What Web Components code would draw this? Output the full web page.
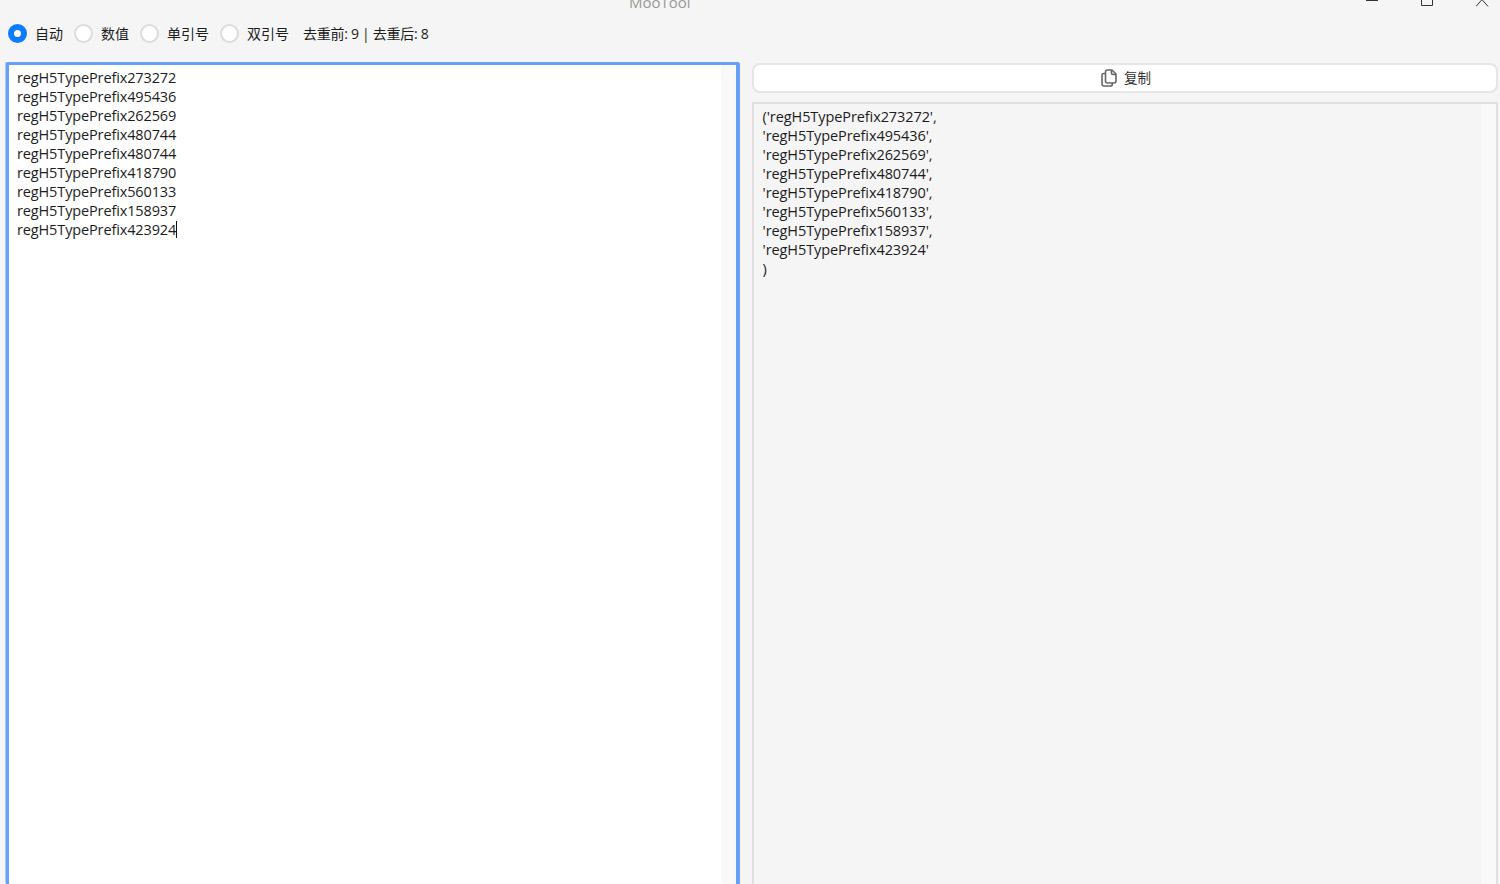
<!DOCTYPE html>
<html lang="zh">
<head>
<meta charset="utf-8">
<title>MooTool</title>
<style>
  html, body { margin: 0; height: 100%; overflow: hidden; background: #f5f5f5; }
  body {
    display: flex;
    flex-direction: column;
    font: 14.5px/19px "Open Sans", "Noto Sans CJK SC", sans-serif;
    color: #1c1c1c;
  }
</style>
</head>
<body>
<title-bar>MooTool</title-bar>
<tool-bar>
  <radio-item checked>自动</radio-item>
  <radio-item>数值</radio-item>
  <radio-item>单引号</radio-item>
  <radio-item>双引号</radio-item>
  <span slot="stats">去重前: 9 | 去重后: 8</span>
</tool-bar>
<split-view>
  <text-pane slot="left" focused>regH5TypePrefix273272
regH5TypePrefix495436
regH5TypePrefix262569
regH5TypePrefix480744
regH5TypePrefix480744
regH5TypePrefix418790
regH5TypePrefix560133
regH5TypePrefix158937
regH5TypePrefix423924</text-pane>
  <copy-button slot="right">复制</copy-button>
  <text-pane slot="right" readonly>('regH5TypePrefix273272',
'regH5TypePrefix495436',
'regH5TypePrefix262569',
'regH5TypePrefix480744',
'regH5TypePrefix418790',
'regH5TypePrefix560133',
'regH5TypePrefix158937',
'regH5TypePrefix423924'
)</text-pane>
</split-view>

<script>
class TitleBar extends HTMLElement {
  constructor() {
    super();
    this.attachShadow({ mode: "open" });
    this.shadowRoot.innerHTML = `
      <style>
        :host { display: flex; height: 10px; overflow: hidden; align-items: flex-end; flex: none; }
        .title { margin: 0 0 1px 629px; width: 737px; font: 15px/14px "Open Sans", sans-serif; color: #999; }
        .win { display: flex; gap: 35px; align-self: flex-start; }
        svg { display: block; width: 20px; height: 10px; fill: none; stroke: #333; stroke-width: 1; }
      </style>
      <span class="title"><slot></slot></span>
      <div class="win">
        <svg viewBox="0 0 20 10"><path d="M0 .5h12"/></svg>
        <svg viewBox="0 0 20 10"><path d="M.5-5h11v10.500h-11z"/></svg>
        <svg viewBox="0 0 20 10"><path d="M0 6.500L6-.5L12 6.500"/></svg>
      </div>`;
  }
}

class ToolBar extends HTMLElement {
  constructor() {
    super();
    this.attachShadow({ mode: "open" });
    this.shadowRoot.innerHTML = `
      <style>
        :host { display: flex; align-items: center; height: 47px; margin-bottom: 5px; padding: 0 0 0 8px; flex: none; box-sizing: border-box; gap: 11px; font-size: 14px; }
        .stats { margin-left: 3px; letter-spacing: -.28px; }
      </style>
      <slot></slot>
      <span class="stats"><slot name="stats"></slot></span>`;
  }
}

class RadioItem extends HTMLElement {
  constructor() {
    super();
    this.attachShadow({ mode: "open" });
    this.shadowRoot.innerHTML = `
      <style>
        :host { display: inline-flex; align-items: center; gap: 8px; }
        .dot { width: 19px; height: 19px; box-sizing: border-box; border-radius: 50%; background: #fff; border: 2px solid #dcdcdc; }
        :host([checked]) .dot { border: 6px solid #0a7cff; }
      </style>
      <span class="dot"></span>
      <span><slot></slot></span>`;
  }
}

class SplitView extends HTMLElement {
  constructor() {
    super();
    this.attachShadow({ mode: "open" });
    this.shadowRoot.innerHTML = `
      <style>
        :host { display: grid; grid-template-columns: 734px 746px; gap: 12px; padding: 0 0 0 6px; flex: 1; min-height: 0; overflow: hidden; }
        .col { display: flex; flex-direction: column; min-height: 0; }
        .right { padding-top: 1px; gap: 9px; }
        ::slotted(text-pane) { flex: 1; }
      </style>
      <div class="col"><slot name="left"></slot></div>
      <div class="col right"><slot name="right"></slot></div>`;
  }
}

class TextPane extends HTMLElement {
  constructor() {
    super();
    this.attachShadow({ mode: "open" });
    this.shadowRoot.innerHTML = `
      <style>
        :host { display: flex; box-sizing: border-box; min-height: 0; background: #f5f5f5; border: 2px solid #e0e0e0; border-bottom-width: 0; }
        :host([focused]) { background: #fff; border: 3px solid #66a0f8; border-right-width: 4px; border-bottom-width: 0; border-radius: 3px 3px 0 0; box-shadow: -1px -1px 0 #a9c9fb; }
        .text { flex: 1; padding: 3px 8px 3px 8.600px; white-space: pre; letter-spacing: -.09px; }
        :host([focused]) .text { padding: 3px 8px; letter-spacing: -.13px; }
        .caret { display: inline-block; width: 1px; height: 17px; background: #111; vertical-align: -3px; }
        .bar { flex: none; width: 15px; background: #f9f9f9; }
      </style>
      <div class="text"><slot></slot>${this.hasAttribute("focused") ? '<span class="caret"></span>' : ""}</div>
      <div class="bar"></div>`;
  }
}

class CopyButton extends HTMLElement {
  constructor() {
    super();
    this.attachShadow({ mode: "open" });
    this.shadowRoot.innerHTML = `
      <style>
        :host { display: flex; align-items: center; justify-content: center; gap: 7px; flex: none; height: 30px; box-sizing: border-box; padding-left: 2px; background: #fff; border: 2px solid #e6e6e6; border-radius: 8px; font-size: 13.500px; color: #333; }
        svg { width: 16px; height: 18px; fill: none; stroke: #666; stroke-width: 1.600; stroke-linejoin: round; }
      </style>
      <svg viewBox="0 0 16 18">
        <path d="M4 4.500H2.800A1.800 1.800 0 0 0 1 6.300V15a2 2 0 0 0 2 2h6.500a1.800 1.800 0 0 0 1.800-1.800V14"/>
        <path d="M4.500 3a2 2 0 0 1 2-2H11l4 4v7a2 2 0 0 1-2 2H6.500a2 2 0 0 1-2-2z"/>
        <path d="M10.500 1v3a1.500 1.500 0 0 0 1.500 1.500h3"/>
      </svg>
      <span><slot></slot></span>`;
  }
}

customElements.define("title-bar", TitleBar);
customElements.define("tool-bar", ToolBar);
customElements.define("radio-item", RadioItem);
customElements.define("split-view", SplitView);
customElements.define("text-pane", TextPane);
customElements.define("copy-button", CopyButton);
</script>
</body>
</html>
